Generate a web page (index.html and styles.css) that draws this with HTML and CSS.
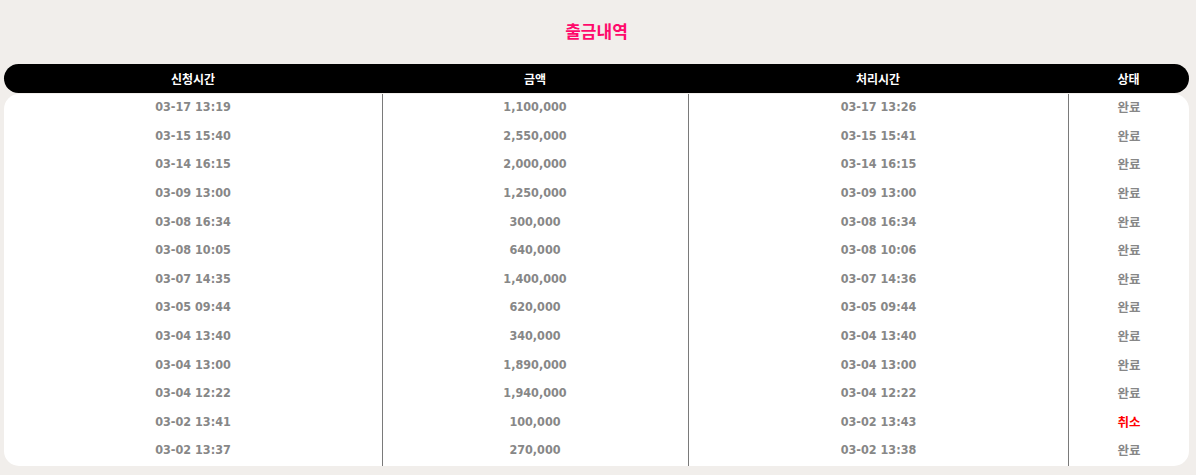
FILE: index.html
```html
<!DOCTYPE html>
<html lang="ko">
<head>
    <meta charset="UTF-8">
    <title>출금내역</title>
    <link rel="stylesheet" href="styles.css">
</head>
<body>
    <section class="withdraw-page">
        <h2 class="page-title">출금내역</h2>

        <!-- list header -->
        <div class="list-head">
            <div>신청시간</div>
            <div>금액</div>
            <div>처리시간</div>
            <div>상태</div>
        </div>

        <!-- list body -->
        <div class="list-body">
            <div class="row"><div>03-17 13:19</div><div>1,100,000</div><div>03-17 13:26</div><div>완료</div></div>
            <div class="row"><div>03-15 15:40</div><div>2,550,000</div><div>03-15 15:41</div><div>완료</div></div>
            <div class="row"><div>03-14 16:15</div><div>2,000,000</div><div>03-14 16:15</div><div>완료</div></div>
            <div class="row"><div>03-09 13:00</div><div>1,250,000</div><div>03-09 13:00</div><div>완료</div></div>
            <div class="row"><div>03-08 16:34</div><div>300,000</div><div>03-08 16:34</div><div>완료</div></div>
            <div class="row"><div>03-08 10:05</div><div>640,000</div><div>03-08 10:06</div><div>완료</div></div>
            <div class="row"><div>03-07 14:35</div><div>1,400,000</div><div>03-07 14:36</div><div>완료</div></div>
            <div class="row"><div>03-05 09:44</div><div>620,000</div><div>03-05 09:44</div><div>완료</div></div>
            <div class="row"><div>03-04 13:40</div><div>340,000</div><div>03-04 13:40</div><div>완료</div></div>
            <div class="row"><div>03-04 13:00</div><div>1,890,000</div><div>03-04 13:00</div><div>완료</div></div>
            <div class="row"><div>03-04 12:22</div><div>1,940,000</div><div>03-04 12:22</div><div>완료</div></div>
            <div class="row"><div>03-02 13:41</div><div>100,000</div><div>03-02 13:43</div><div class="cancel">취소</div></div>
            <div class="row"><div>03-02 13:37</div><div>270,000</div><div>03-02 13:38</div><div>완료</div></div>
        </div>
    </section>
</body>
</html>
```

FILE: styles.css
```css
/* Reset */
* {
    margin: 0;
    padding: 0;
    box-sizing: border-box;
}

body {
    font-family: "DejaVu Sans Condensed", "Noto Sans CJK KR", sans-serif;
    background-color: #f1eeeb;
}

.withdraw-page {
    padding: 0 7px 0 4px;
}

/* Title */
.page-title {
    height: 64px;
    padding-top: 18px;
    text-align: center;
    font-size: 17px;
    font-weight: bold;
    color: #ff0a6c;
    font-family: "Noto Sans CJK KR", sans-serif;
}

/* Header bar */
.list-head,
.list-body .row {
    display: grid;
    grid-template-columns: 378px 306px 380px 1fr;
}

.list-head {
    height: 29px;
    background: #000;
    color: #fff;
    border-radius: 15px;
    font-size: 12px;
    font-weight: bold;
    font-family: "Noto Sans CJK KR", sans-serif;
}

.list-head div {
    display: flex;
    align-items: center;
    justify-content: center;
    padding-bottom: 1px;
}

/* Body */
.list-body {
    margin-top: 1px;
    background: #fff;
    border-radius: 15px;
    overflow: hidden;
}

.list-body .row div {
    height: 28.6px;
    display: flex;
    align-items: center;
    justify-content: center;
    padding-bottom: 3px;
    font-size: 12.5px;
    font-weight: bold;
    color: #878787;
}

.list-body .row div + div {
    border-left: 1px solid #7a7a7a;
}

.list-body .row div:first-child + div {
    padding-right: 1px;
}

.list-body .row div:last-child {
    font-family: "Noto Sans CJK KR", sans-serif;
}

.list-body .cancel {
    color: #ff0000 !important;
}
```
